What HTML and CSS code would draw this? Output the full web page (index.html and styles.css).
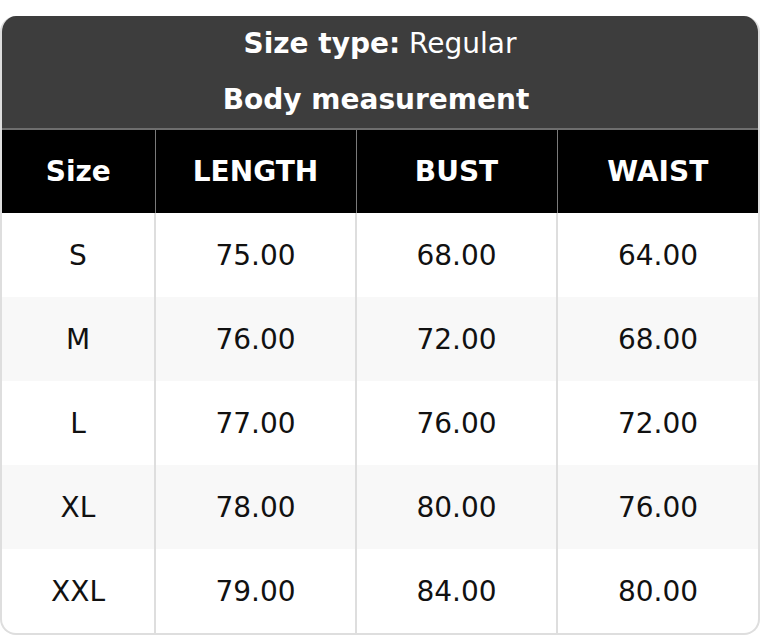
FILE: index.html
```html
<!DOCTYPE html>
<html>
<head>
<meta charset="utf-8">
<link rel="stylesheet" href="styles.css">
</head>
<body>
<div class="card">
  <div class="title">
    <div class="line"><span class="b">Size type:</span> Regular</div>
    <div class="line b sub">Body measurement</div>
  </div>
  <table class="chart">
    <colgroup>
      <col class="c1"><col class="c2"><col class="c3"><col class="c4">
    </colgroup>
    <thead>
      <tr><th>Size</th><th>LENGTH</th><th>BUST</th><th>WAIST</th></tr>
    </thead>
    <tbody>
      <tr><td>S</td><td>75.00</td><td>68.00</td><td>64.00</td></tr>
      <tr class="alt"><td>M</td><td>76.00</td><td>72.00</td><td>68.00</td></tr>
      <tr><td>L</td><td>77.00</td><td>76.00</td><td>72.00</td></tr>
      <tr class="alt"><td>XL</td><td>78.00</td><td>80.00</td><td>76.00</td></tr>
      <tr><td>XXL</td><td>79.00</td><td>84.00</td><td>80.00</td></tr>
    </tbody>
  </table>
</div>
</body>
</html>
```
FILE: styles.css
```css
html, body {
  margin: 0;
  padding: 0;
  background: #fff;
}
body {
  font-family: "DejaVu Sans", Verdana, sans-serif;
  padding-top: 16px;
}
.card {
  width: 760px;
  box-sizing: border-box;
  border: 2px solid #dedede;
  border-top: 0;
  border-radius: 16px;
  overflow: hidden;
  background: #fff;
}
.title {
  background: #3d3d3d;
  color: #fff;
  text-align: center;
  margin: 0 -2px;
}
.line {
  height: 56px;
  line-height: 56px;
  font-size: 28px;
}
.sub {
  padding-right: 8px;
}
.b {
  font-weight: bold;
}
.chart {
  width: 100%;
  border-collapse: collapse;
  table-layout: fixed;
}
.c1 { width: 153px; }
.c2 { width: 201px; }
.c3 { width: 201px; }
.c4 { width: auto; }
.chart th {
  background: #000;
  color: #fff;
  font-size: 28px;
  font-weight: bold;
  height: 83px;
  padding: 0;
  border-top: 2px solid #6e6e6e;
  border-left: 1px solid #7a7a7a;
}
.chart th:first-child,
.chart td:first-child {
  border-left: 0;
}
.chart td {
  text-align: center;
  font-size: 28px;
  color: #111;
  height: 84px;
  padding: 0;
  border-left: 2px solid #dedede;
}
.chart tr.alt td {
  background: #f8f8f8;
}
```
